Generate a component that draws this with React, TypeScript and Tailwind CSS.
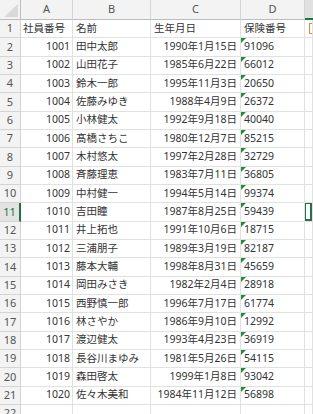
const rows: [number, string, string, string][] = [
  [1001, "田中太郎", "1990年1月15日", "91096"],
  [1002, "山田花子", "1985年6月22日", "66012"],
  [1003, "鈴木一郎", "1995年11月3日", "20650"],
  [1004, "佐藤みゆき", "1988年4月9日", "26372"],
  [1005, "小林健太", "1992年9月18日", "40040"],
  [1006, "髙橋さちこ", "1980年12月7日", "85215"],
  [1007, "木村悠太", "1997年2月28日", "32729"],
  [1008, "斉藤理恵", "1983年7月11日", "36805"],
  [1009, "中村健一", "1994年5月14日", "99374"],
  [1010, "吉田瞳", "1987年8月25日", "59439"],
  [1011, "井上拓也", "1991年10月6日", "18715"],
  [1012, "三浦朋子", "1989年3月19日", "82187"],
  [1013, "藤本大輔", "1998年8月31日", "45659"],
  [1014, "岡田みさき", "1982年2月4日", "28918"],
  [1015, "西野慎一郎", "1996年7月17日", "61774"],
  [1016, "林さやか", "1986年9月10日", "12992"],
  [1017, "渡辺健太", "1993年4月23日", "36919"],
  [1018, "長谷川まゆみ", "1981年5月26日", "54115"],
  [1019, "森田啓太", "1999年1月8日", "93042"],
  [1020, "佐々木美和", "1984年11月12日", "56898"],
]

const cell = "box-border h-[18.33px] border-r border-b border-[#e1e1e1] flex items-center whitespace-nowrap overflow-hidden text-[10.5px] text-[#333]"
const rowHead = "box-border h-[18.33px] border-r border-b border-[#d4d4d4] bg-[#f3f3f3] flex items-center justify-center text-[11px] text-[#555]"

function TextMark() {
  // green "number stored as text" marker
  return (
    <svg className="absolute left-0 top-0" width="5" height="5" viewBox="0 0 5 5">
      <polygon points="0,0 5,0 0,5" fill="#1e8c3a" />
    </svg>
  )
}

function DataRow({ n, r }: { n: number; r: [number, string, string, string] }) {
  const active = n === 11
  return (
    <>
      <div
        className={
          active
            ? "box-border h-[18.33px] border-r-2 border-b border-r-[#217346] border-b-[#d4d4d4] bg-[#e3e3e3] flex items-center justify-center text-[11px] text-[#217346]"
            : rowHead
        }
      >
        {n}
      </div>
      <div className={cell + " justify-end pr-[2px]"}>{r[0]}</div>
      <div className={cell + " pl-[3px]"}>{r[1]}</div>
      <div className={cell + " justify-end pr-[3px]"}>{r[2]}</div>
      <div className={cell + " relative pl-[3px]"}>
        <TextMark />
        {r[3]}
      </div>
      <div className={cell + " relative"}>
        {active && <div className="absolute inset-0 border-2 border-[#217346] -left-px -top-px" />}
      </div>
    </>
  )
}

export default function App() {
  return (
    <div
      className="w-[313px] h-[414px] overflow-hidden bg-white"
      style={{ fontFamily: '"Noto Sans", "Noto Sans CJK JP", sans-serif' }}
    >
      <div className="grid grid-cols-[21px_52px_78px_90px_64px_1fr]">
        {/* column headers */}
        <div className="box-border h-[20px] border-r border-b border-[#bdbdbd] bg-[#f3f3f3] relative">
          <svg className="absolute left-[4px] top-[4px]" width="14" height="13" viewBox="0 0 14 13">
            <polygon points="14,0 14,13 0,13" fill="#d9d9d9" />
          </svg>
        </div>
        {["A", "B", "C", "D"].map((c) => (
          <div
            key={c}
            className="box-border h-[20px] border-r border-b border-r-[#d4d4d4] border-b-[#bdbdbd] bg-[#f3f3f3] flex items-center justify-center text-[11px] text-[#555]"
          >
            {c}
          </div>
        ))}
        <div className="box-border h-[20px] border-b-2 border-[#217346] bg-[#e1e1e1]" />

        {/* row 1 : headings */}
        <div className={rowHead}>1</div>
        <div className={cell + " pl-[2px]"}>社員番号</div>
        <div className={cell + " pl-[3px]"}>名前</div>
        <div className={cell + " pl-[3px]"}>生年月日</div>
        <div className={cell + " pl-[3px]"}>保険番号</div>
        <div className={cell + " relative"}>
          <div className="absolute left-[4px] top-[3px] w-[10px] h-[11px] border border-[#e8892b] bg-white" />
        </div>

        {rows.map((r, i) => (
          <DataRow key={r[0]} n={i + 2} r={r} />
        ))}

        {/* row 22 partially visible */}
        <div className={rowHead}>22</div>
        <div className={cell} />
        <div className={cell} />
        <div className={cell} />
        <div className={cell} />
        <div className={cell} />
      </div>
    </div>
  )
}
